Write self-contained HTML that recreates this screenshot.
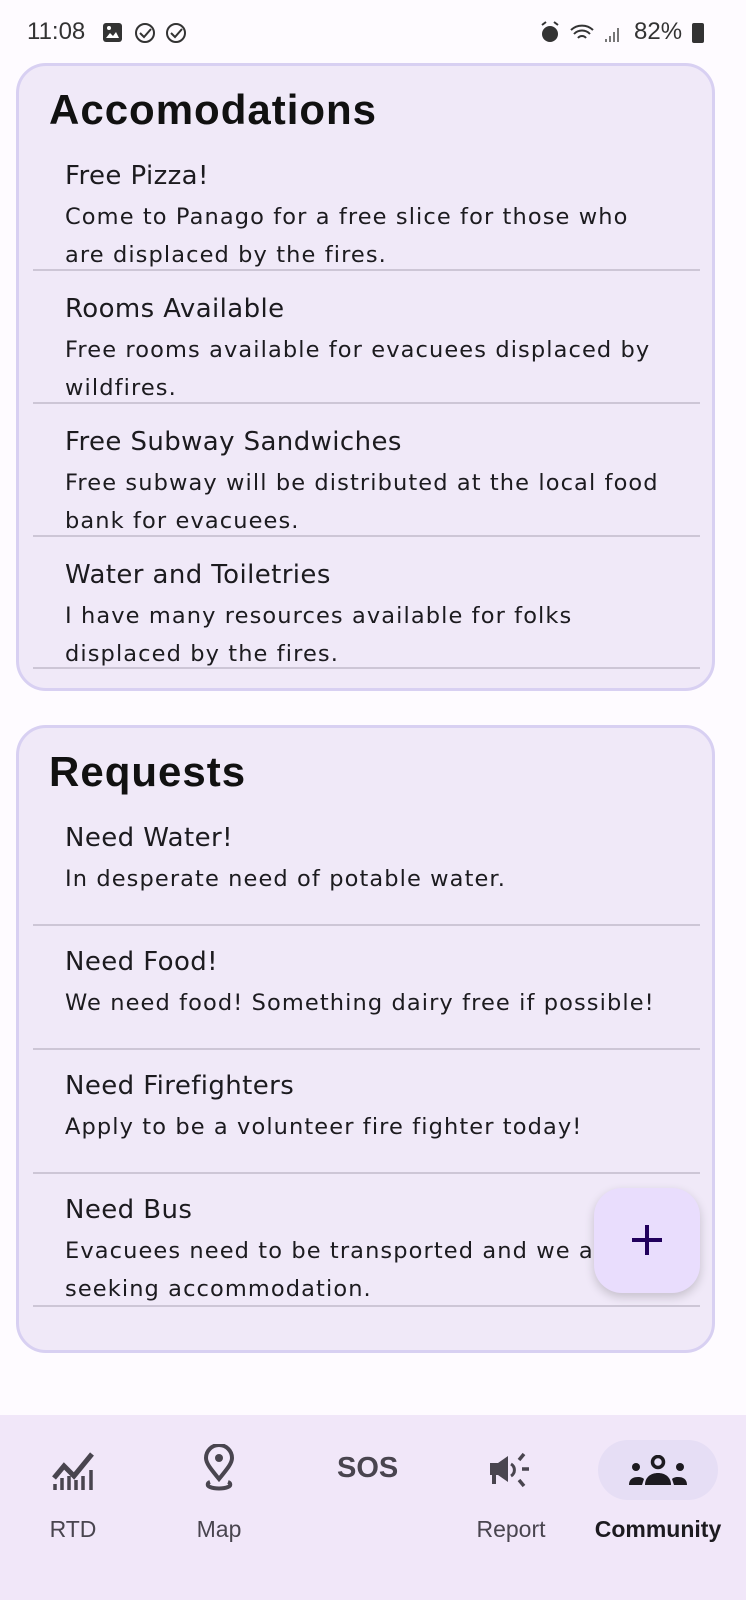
<!DOCTYPE html>
<html><head><meta charset="utf-8"><style>
*{margin:0;padding:0;box-sizing:border-box}
body{width:746px;height:1600px;background:#fefbff;font-family:"Liberation Sans","DejaVu Sans",sans-serif;color:#1c1b1f;position:relative;overflow:hidden}
.abs{position:absolute}
.card{position:absolute;left:16px;width:699px;border:3px solid #d8d0f2;border-radius:30px;background:#f0e9f8;overflow:hidden}
.h{position:absolute;left:30px;font-size:42px;font-weight:bold;color:#111;letter-spacing:1px}
.t{position:absolute;left:46px;font-size:26px;color:#1c1b1f;white-space:nowrap;font-family:"DejaVu Sans",sans-serif;letter-spacing:0.4px}
.b{position:absolute;left:46px;font-size:22.5px;color:#1c1b1f;line-height:38px;white-space:nowrap;letter-spacing:1.1px;font-family:"DejaVu Sans",sans-serif}
.d{position:absolute;left:14px;right:12px;height:2px;background:#cdc6d6}
.nav{position:absolute;left:0;top:1415px;width:746px;height:185px;background:#f1e7f9}
.lbl{position:absolute;top:1516px;font-size:23px;color:#49454f;text-align:center;width:140px}
</style></head><body>
<div class="abs" style="left:27px;top:18px;font-size:24px;color:#333">11:08</div>
<svg class="abs" style="left:101px;top:21px" width="90" height="24" viewBox="0 0 90 24">
<rect x="2" y="2" width="19" height="19" rx="3" fill="#333"/><path d="M5 17l4-5 3 3 3-4 3 6z" fill="#fff"/><circle cx="8" cy="7" r="2" fill="#fff"/>
<circle cx="44" cy="12" r="9" fill="none" stroke="#333" stroke-width="2"/><path d="M39 12l4 4 7-8" fill="none" stroke="#333" stroke-width="2"/>
<circle cx="75" cy="12" r="9" fill="none" stroke="#333" stroke-width="2"/><path d="M70 12l4 4 7-8" fill="none" stroke="#333" stroke-width="2"/>
</svg>
<svg class="abs" style="left:538px;top:20px" width="90" height="26" viewBox="0 0 90 26">
<circle cx="12" cy="14" r="8" fill="#333"/><path d="M4 5l4-3M20 5l-4-3" stroke="#333" stroke-width="2"/>
<path d="M33 10a16 16 0 0 1 22 0M36 14a11 11 0 0 1 16 0M40 18a5 5 0 0 1 8 0" fill="none" stroke="#333" stroke-width="2"/>
<path d="M68 22v-3M72 22v-6M76 22v-10M80 22v-14" stroke="#777" stroke-width="2"/>
</svg>
<div class="abs" style="left:634px;top:18px;font-size:24px;color:#333">82%</div>
<div class="abs" style="left:692px;top:23px;width:12px;height:20px;background:#333;border-radius:2px"></div>

<div class="card" style="top:63px;height:628px">
<div class="h" style="top:20px">Accomodations</div>
<div class="t" style="top:95px">Free Pizza!</div>
<div class="b" style="top:132px">Come to Panago for a free slice for those who<br>are displaced by the fires.</div>
<div class="d" style="top:203px"></div>
<div class="t" style="top:228px">Rooms Available</div>
<div class="b" style="top:265px">Free rooms available for evacuees displaced by<br>wildfires.</div>
<div class="d" style="top:336px"></div>
<div class="t" style="top:361px">Free Subway Sandwiches</div>
<div class="b" style="top:398px">Free subway will be distributed at the local food<br>bank for evacuees.</div>
<div class="d" style="top:469px"></div>
<div class="t" style="top:494px">Water and Toiletries</div>
<div class="b" style="top:531px">I have many resources available for folks<br>displaced by the fires.</div>
<div class="d" style="top:601px"></div>
</div>

<div class="card" style="top:725px;height:628px">
<div class="h" style="top:20px">Requests</div>
<div class="t" style="top:95px">Need Water!</div>
<div class="b" style="top:132px">In desperate need of potable water.</div>
<div class="d" style="top:196px"></div>
<div class="t" style="top:219px">Need Food!</div>
<div class="b" style="top:256px">We need food! Something dairy free if possible!</div>
<div class="d" style="top:320px"></div>
<div class="t" style="top:343px">Need Firefighters</div>
<div class="b" style="top:380px">Apply to be a volunteer fire fighter today!</div>
<div class="d" style="top:444px"></div>
<div class="t" style="top:467px">Need Bus</div>
<div class="b" style="top:504px">Evacuees need to be transported and we are<br>seeking accommodation.</div>
<div class="d" style="top:577px"></div>
</div>

<div class="abs" style="left:594px;top:1188px;width:106px;height:105px;border-radius:28px;background:#e9ddfd;box-shadow:0 4px 10px rgba(0,0,0,0.18)"></div>
<div class="abs" style="left:632px;top:1238px;width:30px;height:4px;background:#21005d"></div>
<div class="abs" style="left:645px;top:1225px;width:4px;height:30px;background:#21005d"></div>

<div class="nav"></div>
<div class="abs" style="left:598px;top:1440px;width:120px;height:60px;border-radius:30px;background:#e6def5"></div>
<svg class="abs" style="left:50px;top:1448px" width="46" height="46" viewBox="0 0 46 46">
<path d="M4 30l10-12 10 10 18-22" fill="none" stroke="#49454f" stroke-width="5"/>
<path d="M5 42v-6M12 42v-12M19 42v-14M26 42v-10M33 42v-14M41 42v-20" stroke="#49454f" stroke-width="3.5"/>
</svg>
<svg class="abs" style="left:200px;top:1444px" width="38" height="48" viewBox="0 0 38 48">
<path d="M19 35C10 24 6 19 6 14a13 13 0 0 1 26 0c0 5-4 10-13 21z" fill="none" stroke="#49454f" stroke-width="4"/>
<circle cx="19" cy="14" r="4" fill="#49454f"/><path d="M10 38c-3 1-3 4 0 5 5 2 13 2 18 0 3-1 3-4 0-5" fill="none" stroke="#49454f" stroke-width="4"/>
</svg>
<div class="abs" style="left:337px;top:1452px;font-size:29px;font-weight:bold;color:#49454f;letter-spacing:0px">SOS</div>
<svg class="abs" style="left:486px;top:1450px" width="50" height="42" viewBox="0 0 50 42">
<path d="M4 13h8l10-7v26l-10-7H4z" fill="#49454f"/><path d="M8 25v9" stroke="#49454f" stroke-width="4"/>
<path d="M25 14a7 7 0 0 1 0 12" fill="none" stroke="#49454f" stroke-width="3"/>
<path d="M38 4l-5 6M36 19h7M33 30l5 6" stroke="#49454f" stroke-width="3.5"/>
</svg>
<svg class="abs" style="left:628px;top:1455px" width="60" height="32" viewBox="0 0 60 32">
<circle cx="30" cy="7" r="5.5" fill="none" stroke="#1d1b20" stroke-width="3.5"/><circle cx="8" cy="12" r="4" fill="#1d1b20"/><circle cx="52" cy="12" r="4" fill="#1d1b20"/>
<path d="M17 30c0-8 6-12 13-12s13 4 13 12z" fill="#1d1b20"/><path d="M1 30c0-6 4-8 9-8 3 0 5 1 6 2l-2 6zM59 30c0-6-4-8-9-8-3 0-5 1-6 2l2 6z" fill="#1d1b20"/>
</svg>
<div class="lbl" style="left:3px">RTD</div>
<div class="lbl" style="left:149px">Map</div>
<div class="lbl" style="left:441px">Report</div>
<div class="lbl" style="left:588px;color:#1d1b20;font-weight:600">Community</div>
</body></html>
